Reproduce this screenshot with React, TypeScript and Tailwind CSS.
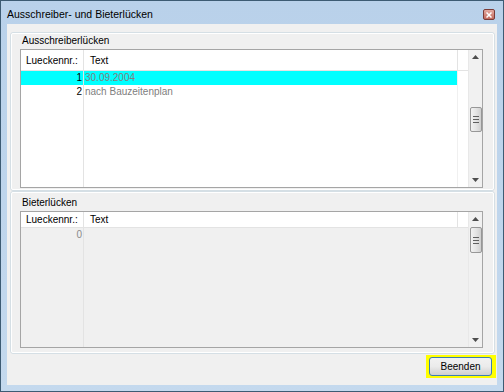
import React from 'react'

const font = { fontFamily: '"Liberation Sans", Arial, sans-serif' }

function ScrollBar({ thumbTop, thumbH }: { thumbTop: number; thumbH: number }) {
  return (
    <div className="relative w-[14px] h-full bg-[#f1f1f1] border-l border-[#e8e8e8] flex flex-col items-center">
      <div className="h-[14px] w-full flex items-center justify-center">
        <svg width="7" height="4" viewBox="0 0 7 4"><path d="M3.5 0 L7 4 L0 4 Z" fill="#4d4d4d" /></svg>
      </div>
      <div className="flex-1 w-full" />
      <div className="h-[14px] w-full flex items-center justify-center">
        <svg width="7" height="4" viewBox="0 0 7 4"><path d="M0 0 L7 0 L3.5 4 Z" fill="#4d4d4d" /></svg>
      </div>
      <div
        className="absolute left-[1px] w-[12px] rounded-[2px] border border-[#979797] bg-gradient-to-r from-[#f2f2f2] via-[#e4e4e4] to-[#d0d0d0] flex flex-col items-center justify-center gap-[2px]"
        style={{ top: thumbTop, height: thumbH }}
      >
        <div className="w-[6px] h-px bg-[#5f5f5f]" />
        <div className="w-[6px] h-px bg-[#5f5f5f]" />
        <div className="w-[6px] h-px bg-[#5f5f5f]" />
      </div>
    </div>
  )
}

type Row = { nr: string; text: string; selected?: boolean; nrGray?: boolean }

function Grid({ rows, bg, height, headerH, thumbTop, thumbH }: { rows: Row[]; bg: string; height: number; headerH: number; thumbTop: number; thumbH: number }) {
  return (
    <div className={`w-[463px] flex border border-[#a5a5a5] ${bg}`} style={{ height }}>
      <div className="flex-1 flex flex-col">
        <div className="flex bg-white border-b border-[#e3e3e3]" style={{ height: headerH }}>
          <div className="w-[63px] border-r border-[#e3e3e3] flex items-center pl-[5px]">Lueckennr.:</div>
          <div className="flex-1 border-r border-[#e3e3e3] flex items-center pl-[6px]">Text</div>
          <div className="w-[10px]" />
        </div>
        <div className="flex-1 flex">
          <div className="w-[63px] border-r border-[#e3e3e3] flex flex-col">
            {rows.map((r, i) => (
              <div key={i} className={`h-[14px] leading-[14px] text-right pr-[1px] ${r.selected ? 'bg-[#00ffff]' : ''} ${r.nrGray ? 'text-[#8a8a8a]' : 'text-black'}`}>{r.nr}</div>
            ))}
          </div>
          <div className="flex-1 flex flex-col border-r border-[#f0f0f0]">
            {rows.map((r, i) => (
              <div key={i} className={`h-[14px] leading-[14px] pl-[1px] text-[#808080] ${r.selected ? 'bg-[#00ffff]' : ''}`}>{r.text}</div>
            ))}
          </div>
          <div className="w-[10px]" />
        </div>
      </div>
      <ScrollBar thumbTop={thumbTop} thumbH={thumbH} />
    </div>
  )
}

export default function App() {
  return (
    <div className="w-[504px] h-[392px] bg-[#3d5b73] p-px text-[10px] text-black" style={font}>
      <div className="w-full h-full flex flex-col bg-gradient-to-b from-[#b9d1ea] to-[#c4d9ee]">
        <div className="h-[23px] flex items-center justify-between pl-[6px] pr-[8px] pt-[4px]">
          <span className="text-[10.5px] text-black">Ausschreiber- und Bieterlücken</span>
          <div className="w-[12px] h-[11px] rounded-[2px] border border-[#7a3b37] bg-gradient-to-b from-[#e3a9a0] to-[#c26a5e] flex items-center justify-center">
            <svg width="6" height="6" viewBox="0 0 6 6"><path d="M0.5 0.5 L5.5 5.5 M5.5 0.5 L0.5 5.5" stroke="#ffffff" strokeWidth="1.5" /></svg>
          </div>
        </div>
        <div className="flex-1 mx-[6px] mb-[6px] bg-[#f0f0f0] flex flex-col pl-[3px] pr-[2px] pt-[8px]">
          <div className="border border-[#d5dfe5] rounded-[3px] flex flex-col">
            <div className="border border-white rounded-[2px] pl-[8px] pb-[1px]">
              <div className="h-[15px] leading-[14px] pl-[2px]">Ausschreiberlücken</div>
              <Grid
                rows={[{ nr: '1', text: '30.09.2004', selected: true }, { nr: '2', text: 'nach Bauzeitenplan' }]}
                bg="bg-white"
                height={139}
                headerH={21}
                thumbTop={57}
                thumbH={25}
              />
            </div>
          </div>
          <div className="border border-[#d5dfe5] rounded-[3px] flex flex-col">
            <div className="border border-white rounded-[2px] pl-[8px] pb-[4px]">
              <div className="h-[18px] leading-[20px] pl-[2px]">Bieterlücken</div>
              <Grid
                rows={[{ nr: '0', text: '', nrGray: true }]}
                bg="bg-[#f0f0f0]"
                height={137}
                headerH={16}
                thumbTop={15}
                thumbH={26}
              />
            </div>
          </div>
          <div className="flex justify-end pt-[1px] mr-[-1px]">
            <div className="w-[70px] h-[23px] bg-[#ffff00] pl-[3px] pr-[4px] py-[2px]">
              <div className="w-full h-full rounded-[3px] border border-[#3c7fb1] bg-gradient-to-b from-[#f2f2f2] via-[#ebebeb] to-[#cfcfcf] flex items-center justify-center">
                Beenden
              </div>
            </div>
          </div>
        </div>
      </div>
    </div>
  )
}
